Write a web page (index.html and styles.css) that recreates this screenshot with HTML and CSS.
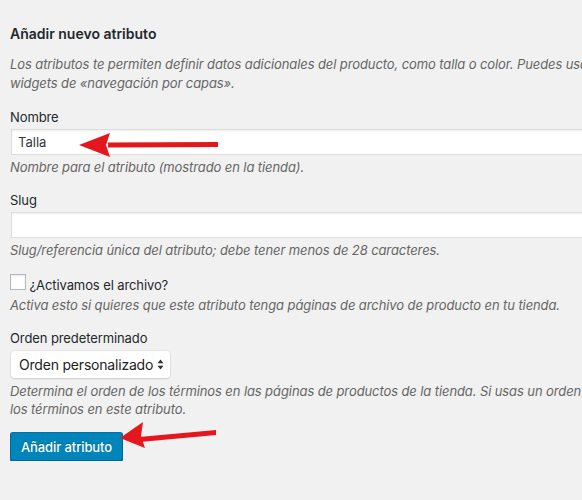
FILE: index.html
```html
<!DOCTYPE html>
<html>
<head>
	<title>Añadir nuevo atributo</title>
	<link rel="stylesheet" href="styles.css">
</head>
<body>
	<div class="form-wrap">
		<h2 class="form-title">Añadir nuevo atributo</h2>
		<p class="description intro">Los atributos te permiten definir datos adicionales del producto, como talla o color. Puedes usar estos atributos en la barra lateral de la tienda usando los<br>widgets de «navegación por capas».</p>
		<form>
			<div class="form-field">
				<label for="attribute_label">Nombre</label>
				<input type="text" id="attribute_label" class="text-input" value="Talla">
				<p class="description">Nombre para el atributo (mostrado en la tienda).</p>
			</div>
			<div class="form-field">
				<label for="attribute_name">Slug</label>
				<input type="text" id="attribute_name" class="text-input" value="">
				<p class="description">Slug/referencia única del atributo; debe tener menos de 28 caracteres.</p>
			</div>
			<div class="form-field">
				<label class="check-row" for="attribute_public">
					<input type="checkbox" id="attribute_public" class="check">
					<span>¿Activamos el archivo?</span>
				</label>
				<p class="description">Activa esto si quieres que este atributo tenga páginas de archivo de producto en tu tienda.</p>
			</div>
			<div class="form-field">
				<label for="attribute_orderby">Orden predeterminado</label>
				<div class="select-box">
					<span>Orden personalizado</span>
					<svg class="updown" width="7" height="11" viewBox="0 0 7 11"><path d="M3.5 0.5 L6.5 4.2 L0.5 4.2 Z M3.5 10.5 L6.5 6.8 L0.5 6.8 Z" fill="#333"/></svg>
				</div>
				<p class="description order-desc">Determina el orden de los términos en las páginas de productos de la tienda. Si usas un orden personalizado, puedes arrastrar y soltar<br>los términos en este atributo.</p>
			</div>
			<div class="submit-row">
				<button type="button" class="button-primary">Añadir atributo</button>
			</div>
		</form>
	</div>

	<!-- red arrows drawn over the screenshot -->
	<svg class="arrow arrow-name" width="145" height="30" viewBox="0 0 145 30">
		<path d="M30 12.5 L140 12 L140 17 L30 17.5 Z" fill="#e3171d"/>
		<path d="M1 15 L32 3 L28 15 L32 27 Z" fill="#e3171d"/>
	</svg>
	<svg class="arrow arrow-button" width="110" height="34" viewBox="0 0 110 34">
		<path d="M20 21 L97 14 L97 19 L21 26 Z" fill="#e3171d"/>
		<path d="M1 22 L24 6 L22 20 L26 32 Z" fill="#e3171d"/>
	</svg>
</body>
</html>
```

FILE: styles.css
```css
body {
	margin: 0;
	background: #f1f1f1;
	color: #23282d;
	font-family: Inter, "Noto Sans", sans-serif;
	font-size: 13px;
	line-height: 19px;
	letter-spacing: -0.1px;
	overflow: hidden;
}
.form-wrap {
	padding: 25px 0 0 10px;
	width: 1200px;
}
.form-title {
	margin: 0;
	font-size: 14px;
	font-weight: 600;
	line-height: 18px;
	letter-spacing: 0;
}
.description {
	margin: 0;
	font-style: italic;
	color: #666;
}
.intro {
	margin-top: 12px;
}
form {
	margin-top: 15px;
}
.form-field {
	margin-bottom: 14px;
}
.form-field > label {
	display: block;
	margin-bottom: 2px;
}
.text-input {
	display: block;
	box-sizing: border-box;
	width: 700px;
	height: 26px;
	margin: 0 0 3px 1px;
	padding: 0 6px;
	border: 1px solid #ddd;
	box-shadow: inset 0 1px 2px rgba(0, 0, 0, 0.07);
	background: #fff;
	font: inherit;
	color: #32373c;
	outline: none;
}
.check-row {
	display: flex;
	align-items: center;
	gap: 6px;
	height: 20px;
	margin-bottom: 4px;
}
.check {
	appearance: none;
	box-sizing: border-box;
	width: 16px;
	height: 16px;
	margin: 0;
	border: 1px solid #b4b9be;
	background: #fff;
	box-shadow: inset 0 1px 2px rgba(0, 0, 0, 0.1);
}
.select-box {
	display: inline-flex;
	align-items: center;
	gap: 4px;
	box-sizing: border-box;
	height: 27px;
	margin: 1px 0 4px 1px;
	padding: 0 6px 0 8px;
	background: #fff;
	border-radius: 4px;
	box-shadow: 0 0 0 1px rgba(0, 0, 0, 0.04), 0 1px 2px rgba(0, 0, 0, 0.12);
	font-size: 14px;
	letter-spacing: -0.2px;
	color: #222;
}
.updown {
	display: block;
}
.order-desc {
	line-height: 18px;
}
.button-primary {
	box-sizing: border-box;
	height: 29px;
	padding: 0 10px;
	background: #0085ba;
	border: 1px solid #0073aa;
	border-color: #0073aa #006799 #006799;
	border-radius: 3px;
	box-shadow: 0 1px 0 #006799;
	color: #fff;
	font-family: inherit;
	font-size: 13px;
	font-weight: 500;
	letter-spacing: -0.1px;
	text-shadow: 0 -1px 1px #006799;
}
.arrow {
	position: absolute;
}
.arrow-name {
	left: 78px;
	top: 130px;
}
.arrow-button {
	left: 119px;
	top: 416px;
}
```
